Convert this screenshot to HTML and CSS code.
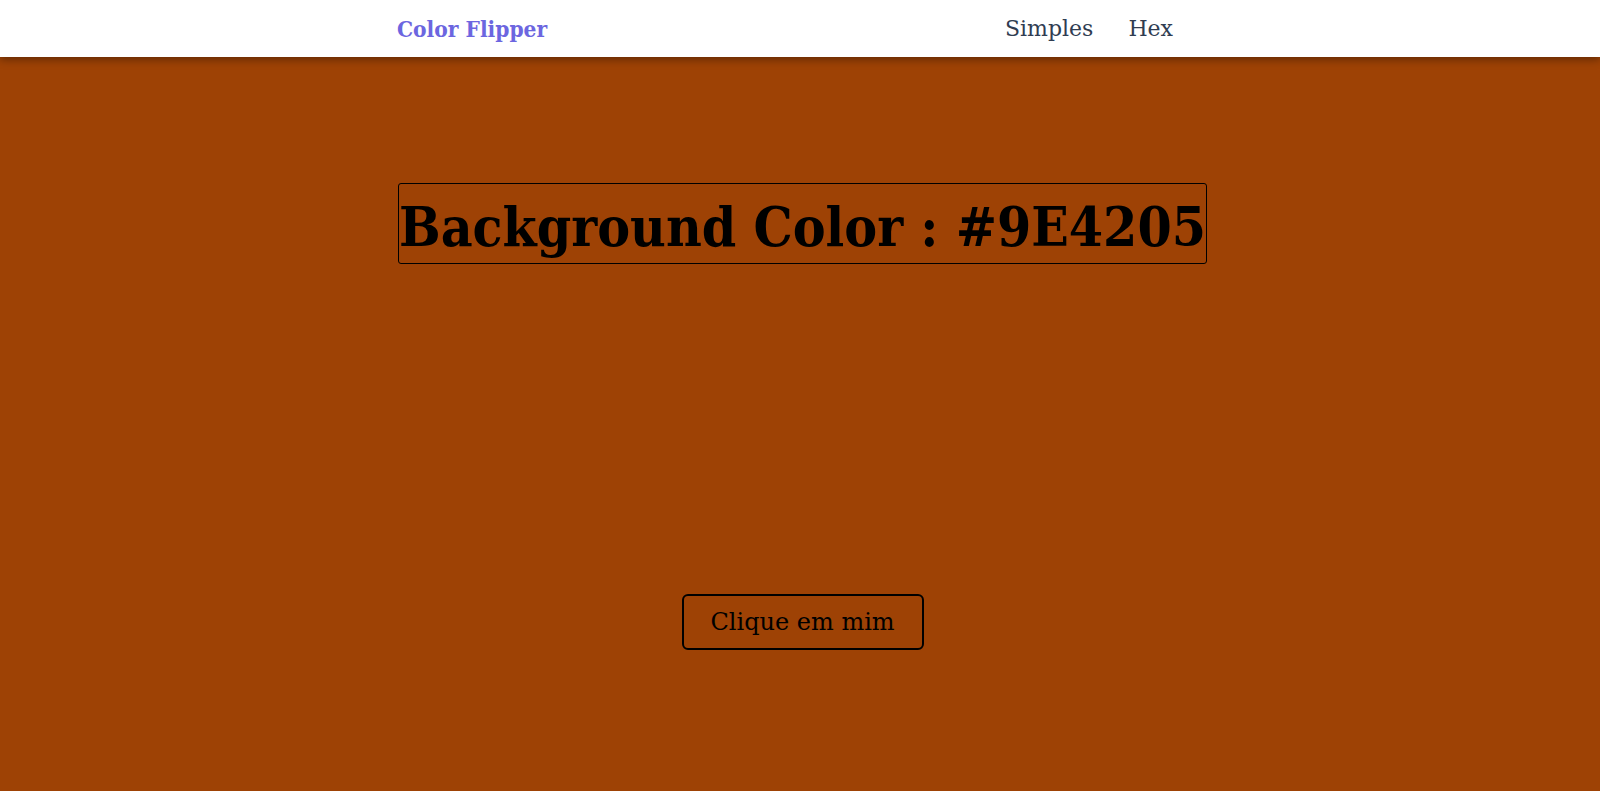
FILE: index.html
```html
<!DOCTYPE html>
<html lang="pt">
<head>
<meta charset="utf-8">
<title>Color Flipper</title>
<link rel="stylesheet" href="styles.css">
</head>
<body>
<nav class="navbar">
  <div class="nav-center">
    <h4 class="logo">Color Flipper</h4>
    <ul class="nav-links">
      <li><a href="#">Simples</a></li>
      <li><a href="#">Hex</a></li>
    </ul>
  </div>
</nav>
<main class="container">
  <h2 class="color-title">Background Color : <span class="color">#9E4205</span></h2>
  <button class="btn" type="button">Clique em mim</button>
</main>
</body>
</html>
```
FILE: styles.css
```css
* { box-sizing: border-box; margin: 0; padding: 0; }
html, body { height: 100%; }
body {
  background: #9e4205;
  font-family: "DejaVu Serif", serif;
  color: #000;
}
.navbar {
  height: 57px;
  background: #fff;
  box-shadow: 0 3px 8px rgba(0, 0, 0, 0.35);
  display: flex;
  align-items: center;
  position: relative;
  z-index: 1;
}
.nav-center {
  width: 806px;
  margin-left: 397px;
  display: flex;
  align-items: center;
  justify-content: space-between;
  padding-right: 30px;
}
.logo {
  color: #6c66e0;
  font-size: 22.5px;
  font-weight: 700;
  font-stretch: condensed;
}
.nav-links {
  list-style: none;
  display: flex;
  gap: 35px;
}
.nav-links a {
  text-decoration: none;
  color: #303d52;
  font-size: 22px;
}
.container {
  display: flex;
  flex-direction: column;
  align-items: center;
  padding-top: 126px;
  padding-left: 5px;
}
.color-title {
  font-size: 54.8px;
  font-weight: 700;
  font-stretch: condensed;
  border: 1px solid #000;
  border-radius: 3px;
  line-height: 78px;
  height: 81px;
  padding-top: 4px;
  white-space: nowrap;
}
.btn {
  margin-top: 330px;
  width: 242px;
  height: 56px;
  background: transparent;
  border: 2px solid #000;
  border-radius: 6px;
  font-family: "DejaVu Serif", serif;
  font-size: 24px;
  color: #000;
  cursor: pointer;
}
```
